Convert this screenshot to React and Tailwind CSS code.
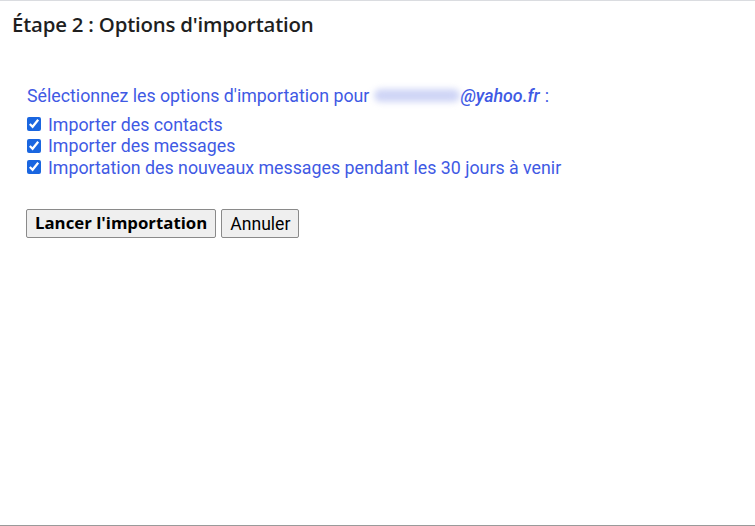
export default function App() {
  const options = [
    "Importer des contacts",
    "Importer des messages",
    "Importation des nouveaux messages pendant les 30 jours à venir",
  ];

  return (
    <div className="w-[755px] h-[526px] bg-white border-t border-[#dadce0] border-b border-b-dashed border-b-[#9a9a9a] flex flex-col font-['Roboto',sans-serif]">
      <h2 className="pl-[12px] pt-[10px] text-[20.4px] leading-[26px] font-semibold text-[#1f1f1f] font-['Open_Sans',sans-serif] tracking-[-0.2px]">
        Étape 2 : Options d'importation
      </h2>

      <div className="pl-[27px] pt-[48px] text-[17.8px] leading-[21.5px] text-[#3f5ae4]">
        <p className="flex items-center">
          <span>Sélectionnez les options d'importation pour</span>
          <span className="ml-[5px] w-[86px] h-[13px] rounded-full bg-[#cfd5f6] blur-[3px]" />
          <span className="italic font-medium">@yahoo.fr</span>
          <span className="ml-[5px]">:</span>
        </p>
        <div className="mt-[7px] flex flex-col">
          {options.map((o) => (
            <label key={o} className="flex items-center gap-[7px] h-[21.5px]">
              <input type="checkbox" defaultChecked className="w-[14px] h-[14px] m-0 accent-[#1a66e0]" />
              <span>{o}</span>
            </label>
          ))}
        </div>

        <div className="mt-[31px] -ml-[1px] flex gap-[5px]">
          <button className="h-[29px] px-[8px] bg-[#efefef] border border-[#8a8a8a] rounded-[2px] text-[16.8px] leading-none font-bold text-black font-['Open_Sans',sans-serif]">
            Lancer l'importation
          </button>
          <button className="h-[29px] px-[8px] pt-[2px] bg-[#efefef] border border-[#8a8a8a] rounded-[2px] text-[17.6px] leading-none text-black font-['Roboto',sans-serif]">
            Annuler
          </button>
        </div>
      </div>
    </div>
  );
}
